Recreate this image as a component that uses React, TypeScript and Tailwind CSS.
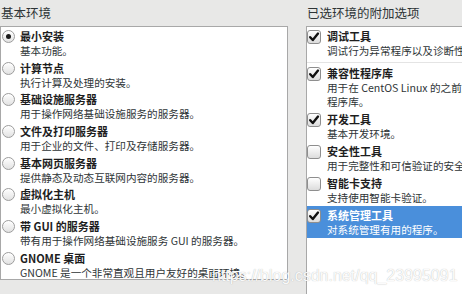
import React from 'react';

const envs = [
  { title: '最小安装', desc: '基本功能。', selected: true },
  { title: '计算节点', desc: '执行计算及处理的安装。' },
  { title: '基础设施服务器', desc: '用于操作网络基础设施服务的服务器。' },
  { title: '文件及打印服务器', desc: '用于企业的文件、打印及存储服务器。' },
  { title: '基本网页服务器', desc: '提供静态及动态互联网内容的服务器。' },
  { title: '虚拟化主机', desc: '最小虚拟化主机。' },
  { title: '带 GUI 的服务器', desc: '带有用于操作网络基础设施服务 GUI 的服务器。' },
  { title: 'GNOME 桌面', desc: 'GNOME 是一个非常直观且用户友好的桌面环境。' },
];

const addons = [
  { title: '调试工具', desc: ['调试行为异常程序以及诊断性能问题的工具。'], checked: true },
  { title: '兼容性程序库', desc: ['用于在 CentOS Linux 的之前版本中构建的应用程序的兼容', '程序库。'], checked: true },
  { title: '开发工具', desc: ['基本开发环境。'], checked: true },
  { title: '安全性工具', desc: ['用于完整性和可信验证的安全性工具。'], checked: false },
  { title: '智能卡支持', desc: ['支持使用智能卡验证。'], checked: false },
  { title: '系统管理工具', desc: ['对系统管理有用的程序。'], checked: true, active: true },
];

function Radio({ on }: { on?: boolean }) {
  return (
    <div className="w-[13px] h-[13px] rounded-full border border-[#9c9c9c] bg-linear-to-b from-white to-[#e2e2e2] flex items-center justify-center shadow-[inset_0_1px_0_white]">
      {on && <div className="w-[5px] h-[5px] rounded-full bg-[#1a1a1a]" />}
    </div>
  );
}

function Check({ on }: { on?: boolean }) {
  return (
    <div className="w-[14px] h-[14px] rounded-[3px] border border-[#8e8e8e] bg-linear-to-b from-white to-[#dcdcdc] flex items-center justify-center">
      {on && (
        <svg width="12" height="12" viewBox="0 0 12 12">
          <path d="M2.2 6.2 L4.8 9 L10 2.6" fill="none" stroke="#111" strokeWidth="2.4" strokeLinecap="round" strokeLinejoin="round" />
        </svg>
      )}
    </div>
  );
}

export default function App() {
  return (
    <div
      className="relative w-[462px] h-[294px] overflow-hidden bg-[#e8e8e7] flex text-[#2e3436]"
      style={{ fontFamily: '"Noto Sans CJK SC", "Liberation Sans", sans-serif' }}
    >
      {/* Base environment */}
      <div className="w-[288px] flex flex-col shrink-0">
        <div className="h-[26px] flex items-center pl-[1px] text-[12.5px] leading-none">基本环境</div>
        <div className="h-[254px] bg-white border border-[#a8a8a8] overflow-hidden">
          {envs.map((e) => (
            <div key={e.title} className="h-[31.7px] flex pt-[1px]">
              <div className="w-[19px] pl-[1px] pt-[2px] shrink-0">
                <Radio on={e.selected} />
              </div>
              <div className="flex flex-col whitespace-nowrap">
                <div className="text-[11px] leading-[16px] font-bold text-[#1e1e1e]">{e.title}</div>
                <div className="text-[10.6px] leading-[14px]">{e.desc}</div>
              </div>
            </div>
          ))}
        </div>
      </div>

      {/* Add-ons */}
      <div className="ml-[18px] flex-1 flex flex-col min-w-0">
        <div className="h-[26px] flex items-center pl-[1px] text-[12.5px] leading-none whitespace-nowrap">已选环境的附加选项</div>
        <div className="flex-1 bg-white border-l border-t border-[#a8a8a8] overflow-hidden">
          {addons.map((a, i) => (
            <div
              key={a.title}
              className={`flex pt-[1px] pb-[1px] ${a.active ? 'bg-[#4a8fdb] text-white' : ''} ${
                i === 0 ? 'pb-[4px] border-b border-[#e4e4e4] mb-[1px]' : ''
              }`}
            >
              <div className="w-[20px] pt-[2px] shrink-0">
                <Check on={a.checked} />
              </div>
              <div className="flex flex-col whitespace-nowrap">
                <div className={`text-[11px] leading-[16px] font-bold ${a.active ? 'text-white' : 'text-[#1e1e1e]'}`}>{a.title}</div>
                {a.desc.map((d) => (
                  <div key={d} className="text-[10.6px] leading-[14px]">{d}</div>
                ))}
              </div>
            </div>
          ))}
        </div>
      </div>

      {/* watermark */}
      <div
        className="absolute left-[212px] top-[268px] text-[16px] leading-[16px] text-white/95 whitespace-nowrap [text-shadow:0_0_1px_rgba(0,0,0,0.3)]"
        style={{ fontFamily: '"Liberation Sans", Arial, sans-serif' }}
      >
        https://blog.csdn.net/qq_23995091
      </div>
    </div>
  );
}
